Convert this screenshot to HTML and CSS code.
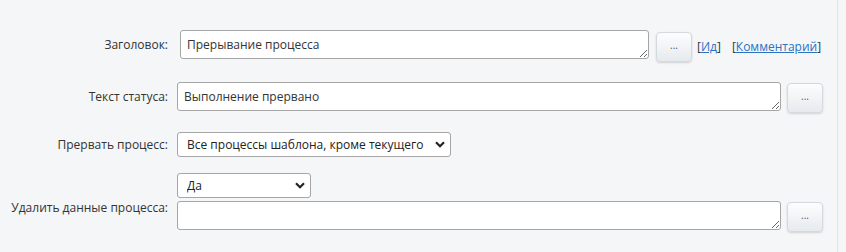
FILE: index.html
```html
<!DOCTYPE html>
<html lang="ru">
<head>
  <meta charset="UTF-8" />
  <title>Прерывание процесса</title>
  <link rel="stylesheet" href="styles.css">
</head>
<body>
  <div class="panel">
    <div class="row row-title">
      <label class="label">Заголовок:</label>
      <div class="field">
        <textarea class="text text-title">Прерывание процесса</textarea>
        <button type="button" class="dots">...</button>
        <span class="links">[<a href="#">Ид</a>]</span>
        <span class="links links-comment">[<a href="#">Комментарий</a>]</span>
      </div>
    </div>

    <div class="row row-status">
      <label class="label">Текст статуса:</label>
      <div class="field">
        <textarea class="text text-wide">Выполнение прервано</textarea>
        <button type="button" class="dots">...</button>
      </div>
    </div>

    <div class="row row-stop">
      <label class="label">Прервать процесс:</label>
      <div class="field">
        <div class="select-wrap select-long">
          <select class="select">
            <option>Все процессы шаблона, кроме текущего</option>
          </select>
          <svg class="chevron" width="10" height="7" viewBox="0 0 10 7"><path d="M1 1.2 L5 5.2 L9 1.2" fill="none" stroke="#222" stroke-width="2.2"/></svg>
        </div>
      </div>
    </div>

    <div class="row row-delete">
      <label class="label label-low">Удалить данные процесса:</label>
      <div class="field field-col">
        <div class="select-wrap select-short">
          <select class="select">
            <option>Да</option>
          </select>
          <svg class="chevron" width="10" height="7" viewBox="0 0 10 7"><path d="M1 1.2 L5 5.2 L9 1.2" fill="none" stroke="#222" stroke-width="2.2"/></svg>
        </div>
        <div class="field">
          <textarea class="text text-wide"></textarea>
          <button type="button" class="dots">...</button>
        </div>
      </div>
    </div>
  </div>
</body>
</html>
```

FILE: styles.css
```css
body {
  margin: 0;
  background: #f4f6f8;
  font-family: "Open Sans", "Noto Sans", Arial, sans-serif;
  font-size: 12px;
  color: #333;
}
.panel {
  width: 838px;
  height: 252px;
  box-sizing: border-box;
  border-right: 1px solid #e2e5e8;
  padding-top: 30px;
}
.row {
  display: flex;
  align-items: flex-start;
}
.row-title { height: 52px; }
.row-status { height: 50px; }
.row-stop { height: 41px; }
.label {
  width: 160px;
  margin-left: 8px;
  margin-right: 9px;
  text-align: right;
  line-height: 29px;
  white-space: nowrap;
}
.row-stop .label { line-height: 25px; }
.label-low {
  line-height: 17px;
  padding-top: 26px;
}
.field {
  display: flex;
  align-items: flex-start;
}
.field-col {
  flex-direction: column;
}
.text {
  box-sizing: border-box;
  height: 29px;
  margin: 0;
  padding: 5px 6px;
  border: 1px solid #a6a6a6;
  border-radius: 3px;
  background: #fff;
  font-family: inherit;
  font-size: 12px;
  line-height: 17px;
  color: #333;
}
.text-title {
  width: 469px;
  margin-left: 3px;
}
.text-wide {
  width: 604px;
}
.dots {
  box-sizing: border-box;
  width: 36px;
  height: 30px;
  margin: 1px 0 0 6px;
  padding: 0 0 4px;
  border: 1px solid #d4d9de;
  border-radius: 4px;
  background: linear-gradient(#fdfdfe, #e6eaee);
  box-shadow: 0 1px 2px rgba(0, 0, 0, 0.15);
  font-family: inherit;
  font-size: 10px;
  color: #556;
}
.row-title .dots {
  margin-top: 2px;
  margin-left: 7px;
}
.links {
  line-height: 29px;
  margin-left: 5px;
  padding-top: 2px;
}
.links-comment {
  margin-left: 11px;
}
.links a {
  color: #2a72c4;
}
.select-wrap {
  position: relative;
}
.select {
  box-sizing: border-box;
  height: 25px;
  padding: 0 0 0 9px;
  border: 1px solid #a6a6a6;
  border-radius: 3px;
  background: #fff;
  appearance: none;
  font-family: inherit;
  font-size: 12px;
  color: #222;
}
.select-long .select { width: 274px; }
.select-short .select {
  width: 134px;
  margin-bottom: 3px;
}
.chevron {
  position: absolute;
  right: 6px;
  top: 9px;
  pointer-events: none;
}
```
